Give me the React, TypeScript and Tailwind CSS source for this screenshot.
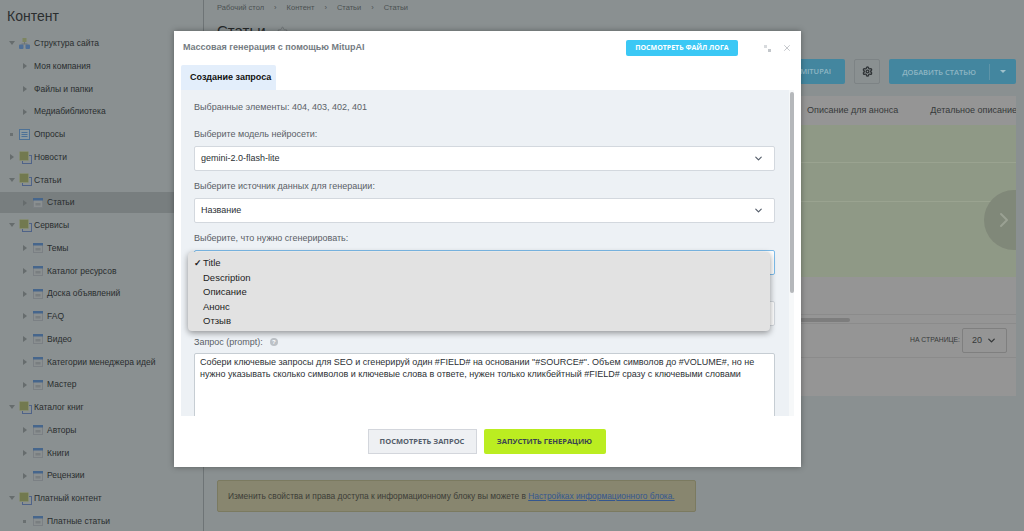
import { ChevronDown, ChevronRight, Settings, Star, X } from "lucide-react";

type Kind = "tree" | "poll" | "block" | "table";

const menu: { label: string; depth: number; arrow: "down" | "right" | "dot"; icon?: Kind; active?: boolean }[] = [
  { label: "Структура сайта", depth: 0, arrow: "down", icon: "tree" },
  { label: "Моя компания", depth: 1, arrow: "right" },
  { label: "Файлы и папки", depth: 1, arrow: "right" },
  { label: "Медиабиблиотека", depth: 1, arrow: "right" },
  { label: "Опросы", depth: 0, arrow: "dot", icon: "poll" },
  { label: "Новости", depth: 0, arrow: "right", icon: "block" },
  { label: "Статьи", depth: 0, arrow: "down", icon: "block" },
  { label: "Статьи", depth: 1, arrow: "right", icon: "table", active: true },
  { label: "Сервисы", depth: 0, arrow: "down", icon: "block" },
  { label: "Темы", depth: 1, arrow: "right", icon: "table" },
  { label: "Каталог ресурсов", depth: 1, arrow: "right", icon: "table" },
  { label: "Доска объявлений", depth: 1, arrow: "right", icon: "table" },
  { label: "FAQ", depth: 1, arrow: "right", icon: "table" },
  { label: "Видео", depth: 1, arrow: "right", icon: "table" },
  { label: "Категории менеджера идей", depth: 1, arrow: "right", icon: "table" },
  { label: "Мастер", depth: 1, arrow: "right", icon: "table" },
  { label: "Каталог книг", depth: 0, arrow: "down", icon: "block" },
  { label: "Авторы", depth: 1, arrow: "right", icon: "table" },
  { label: "Книги", depth: 1, arrow: "right", icon: "table" },
  { label: "Рецензии", depth: 1, arrow: "right", icon: "table" },
  { label: "Платный контент", depth: 0, arrow: "down", icon: "block" },
  { label: "Платные статьи", depth: 1, arrow: "dot", icon: "table" },
];

function MenuIcon({ kind }: { kind: Kind }) {
  if (kind === "tree") {
    return (
      <svg width="11" height="11" viewBox="0 0 11 11" className="shrink-0">
        <rect x="3.5" y="0" width="4" height="4" fill="#7d8560" />
        <path d="M5.5 4v2M2.5 6h6" stroke="#6c7477" fill="none" />
        <rect x="0" y="6.5" width="4.5" height="4.5" rx="1" fill="#4f6f96" />
        <rect x="6.5" y="6.5" width="4.5" height="4.5" rx="1" fill="#4f6f96" />
      </svg>
    );
  }
  if (kind === "poll") {
    return (
      <svg width="11" height="11" viewBox="0 0 11 11" className="shrink-0">
        <rect x="0.5" y="0.5" width="10" height="10" fill="#8d9aa0" stroke="#4d7196" />
        <path d="M2.5 3.5h6M2.5 5.5h6M2.5 7.5h6" stroke="#4d7196" />
      </svg>
    );
  }
  if (kind === "block") {
    return (
      <svg width="13" height="13" viewBox="0 0 13 13" className="shrink-0">
        <rect x="3.5" y="4.5" width="9" height="8" fill="none" stroke="#4f6388" />
        <rect x="0.5" y="0.5" width="9" height="9" rx="1" fill="#72794f" stroke="#858c72" />
      </svg>
    );
  }
  return (
    <svg width="10" height="10" viewBox="0 0 10 10" className="shrink-0">
      <rect x="0.5" y="0.5" width="9" height="9" fill="#8a8f90" stroke="#7b8084" />
      <rect x="0" y="0" width="10" height="2.5" fill="#46668c" />
      <rect x="2.5" y="5" width="5" height="2.5" fill="#797e80" />
    </svg>
  );
}

function Arrow({ type }: { type: "down" | "right" | "dot" }) {
  if (type === "dot") return <span className="block w-[3px] h-[3px] bg-[#6a7071] mx-[1px]" />;
  if (type === "down") {
    return <span className="block w-0 h-0 border-x-[3.5px] border-x-transparent border-t-[4px] border-t-[#666c6d]" />;
  }
  return <span className="block w-0 h-0 border-y-[3.5px] border-y-transparent border-l-[4px] border-l-[#666c6d] ml-[1px]" />;
}

function Sidebar() {
  return (
    <aside className="w-[204px] shrink-0 border-r border-[#6e7476] flex flex-col">
      <div className="h-[32px] shrink-0 pl-[7px] pt-[7px] text-[14px] leading-[18px] text-[#2a2e2f]">Контент</div>
      <ul className="flex flex-col">
        {menu.map((item, i) => (
          <li
            key={i}
            className={`flex items-center shrink-0 text-[8.5px] text-[#292d2e] ${
              item.active ? "h-[20.75px] my-[1px] bg-[#787e7f]" : "h-[22.75px]"
            } ${item.depth === 0 ? "pl-[9px]" : "pl-[22px]"}`}
          >
            <span className="w-[10px] flex justify-start shrink-0">
              <Arrow type={item.arrow} />
            </span>
            {item.icon && (
              <span className={`flex shrink-0 ${item.depth === 0 ? "w-[13px] mr-[2px]" : "ml-[1px] w-[10px] mr-[4px]"}`}>
                <MenuIcon kind={item.icon} />
              </span>
            )}
            {!item.icon && <span className="w-[0px] mr-[2px]" />}
            <span>{item.label}</span>
          </li>
        ))}
      </ul>
    </aside>
  );
}

function Background() {
  return (
    <main className="flex-1 min-w-0 pl-[13px] pr-[8px] flex flex-col">
      <div className="h-[16px] pt-[3px] flex gap-[10px] text-[7.5px] leading-[10px] text-[#4a5052]">
        <span>Рабочий стол</span>
        <span>›</span>
        <span>Контент</span>
        <span>›</span>
        <span>Статьи</span>
        <span>›</span>
        <span>Статьи</span>
      </div>
      <div className="h-[43px] pt-[3px] flex gap-[11px] text-[15px] leading-[24px] text-[#25292a]">
        Статьи
        <Star size={11} className="text-[#6e7476] mt-[7px]" />
      </div>
      <div className="h-[37px] flex items-start justify-end gap-[9px] font-['Open_Sans',sans-serif]">
        <div className="w-[60px] h-[25px] rounded-[2px] bg-[#43869f] flex items-center justify-end pr-[14px] text-[7.5px] font-semibold text-[#8fb6c4]">MITUPAI</div>
        <div className="w-[26px] h-[25px] rounded-[2px] border border-[#7d8385] flex items-center justify-center">
          <Settings size={11} strokeWidth={3} className="text-[#303437]" />
        </div>
        <div className="w-[127px] h-[25px] rounded-[2px] bg-[#43869f] flex items-center text-[7.5px] font-semibold text-[#8fb6c4]">
          <span className="w-[101px] text-center border-r border-[#5e94a8] leading-[16px]">ДОБАВИТЬ СТАТЬЮ</span>
          <span className="flex-1 flex justify-center">
            <span className="block w-0 h-0 border-x-[3px] border-x-transparent border-t-[3px] border-t-[#9fc1cc]" />
          </span>
        </div>
      </div>
      <div className="flex flex-col h-[300px] shrink-0 bg-[#959595] overflow-hidden">
        <div className="h-[29px] shrink-0 flex items-center justify-end gap-[32px] -mr-[1px] text-[9px] text-[#36393a] whitespace-nowrap">
          <span>Описание для анонса</span>
          <span>Детальное описание</span>
        </div>
        <div className="h-[152px] shrink-0 bg-[#8f9986] relative flex flex-col overflow-hidden">
          <div className="h-[38px] border-b border-[#9aa390]" />
          <div className="h-[39px] border-b border-[#9aa390]" />
          <span className="absolute right-[-28px] top-[65px] w-[60px] h-[60px] rounded-full bg-[#808879] flex items-center pl-[8px]">
            <ChevronRight size={24} className="text-[#9aa193]" />
          </span>
        </div>
        <div className="h-[38px] shrink-0 border-b border-[#8b8b8b]" />
        <div className="h-[9px] shrink-0 bg-[#959595] border-b border-[#8b8b8b] pt-[3px]">
          <span className="block h-[4px] w-[50px] ml-[583px] rounded-full bg-[#7d7d7d]" />
        </div>
        <div className="h-[34px] shrink-0 border-b border-[#8b8b8b] flex items-center justify-end pr-[9px] text-[6.8px] text-[#36393a]">
          <span className="mr-[2px]">НА СТРАНИЦЕ:</span>
          <span className="w-[45px] h-[25px] rounded-[2px] border border-[#7f7f7f] flex items-center justify-between px-[9px] text-[9px]">
            20
            <ChevronDown size={11} strokeWidth={3} />
          </span>
        </div>
      </div>
      <div className="mt-[84px] w-[479px] h-[32px] shrink-0 rounded-[2px] border border-[#7b7a60] bg-[#88866f] flex items-center pl-[10px] text-[8.4px] text-[#3c3d37] whitespace-nowrap">
        Изменить свойства и права доступа к информационному блоку вы можете в&nbsp;
        <span className="text-[#34578f] underline">Настройках информационного блока.</span>
      </div>
    </main>
  );
}

function Field({ label, value, first }: { label: string; value: string; first?: boolean }) {
  return (
    <>
      <div className={`h-[12px] leading-[12px] text-[#5a6066] ${first ? "mt-[15px]" : "mt-[9px]"}`}>{label}</div>
      <div className="mt-[6px] h-[25px] bg-white rounded-[2px] border border-[#d3d8de] flex items-center justify-between pl-[6px] pr-[10px] text-[#2c3034]">
        {value}
        <ChevronDown size={11} strokeWidth={2.5} className="text-[#535c69]" />
      </div>
    </>
  );
}

const options = ["Title", "Description", "Описание", "Анонс", "Отзыв"];

function Modal() {
  return (
    <div className="absolute left-[174px] top-[31px] w-[627px] h-[436px] bg-white shadow-[0_0_6px_rgba(0,0,0,0.35)] flex flex-col font-['Liberation_Sans',sans-serif]">
      <header className="h-[34px] shrink-0 flex items-center pl-[9px] pr-[9px]">
        <span className="text-[9px] font-bold text-[#747b82]">Массовая генерация с помощью MitupAI</span>
        <span className="ml-auto w-[112px] h-[16px] rounded-[2px] bg-[#3bc8f5] flex items-center justify-center font-['Open_Sans',sans-serif] text-[7px] font-bold text-white whitespace-nowrap">
          ПОСМОТРЕТЬ ФАЙЛ ЛОГА
        </span>
        <span className="ml-[26px] w-[7px] h-[7px] relative">
          <span className="absolute left-0 top-0 w-[3px] h-[3px] bg-[#d7dadd]" />
          <span className="absolute right-0 bottom-0 w-[3px] h-[3px] bg-[#c3c7cb]" />
        </span>
        <X size={10} strokeWidth={2} className="ml-[11px] text-[#b9bdc2]" />
      </header>
      <div className="pl-[7px]">
        <div className="w-[95px] h-[25px] rounded-t-[2px] bg-[#e3eefb] flex items-center pl-[9px] text-[9px] font-bold text-[#111]">
          Создание запроса
        </div>
      </div>
      <div className="mx-[7px] h-[326px] shrink-0 bg-[#edf1f5] relative overflow-hidden text-[9px]">
        <div className="pl-[13px] pr-[19px] pt-[5px]">
          <div className="h-[12px] leading-[12px] mt-[6px] text-[#5a6066]">Выбранные элементы: 404, 403, 402, 401</div>
          <Field first label="Выберите модель нейросети:" value="gemini-2.0-flash-lite" />
          <Field label="Выберите источник данных для генерации:" value="Название" />
          <div className="h-[12px] leading-[12px] mt-[9px] text-[#5a6066]">Выберите, что нужно сгенерировать:</div>
          <div className="relative mt-[6px] h-[25px] bg-white rounded-[2px] border border-[#7dbcea]">
            <ul className="absolute -left-[7px] top-[1px] w-[582px] h-[79px] z-10 rounded-[4px] bg-[#e2e2e2] shadow-[0_2px_6px_rgba(0,0,0,0.4)] text-[9.5px] text-[#1d1d1d] pt-[4px] font-medium">
              {options.map((o, i) => (
                <li key={o} className="h-[14.6px] leading-[14.6px] pl-[15px] relative">
                  {i === 0 && <span className="absolute left-[6px] text-[9px] font-bold">✓</span>}
                  {o}
                </li>
              ))}
            </ul>
          </div>
          <div className="mt-[26px] h-[25px] bg-white rounded-[2px] border border-[#d3d8de]" />
          <div className="h-[12px] leading-[12px] mt-[10px] text-[#5a6066] flex items-center">
            Запрос (prompt):
            <span className="ml-[7px] w-[8px] h-[8px] rounded-full bg-[#bcc1c6] text-white text-[6px] leading-[8px] text-center font-bold">?</span>
          </div>
          <div className="mt-[5px] h-[100px] bg-white rounded-[2px] border border-[#c6cdd3] px-[5px] pt-[3px] leading-[11.5px] text-[#2c3034]">
            Собери ключевые запросы для SEO и сгенерируй один #FIELD# на основании "#SOURCE#". Объем символов до #VOLUME#, но не нужно указывать сколько символов и ключевые слова в ответе, нужен только кликбейтный #FIELD# сразу с ключевыми словами
          </div>
        </div>
        <span className="absolute right-0 top-0 bottom-0 w-[5px] bg-[#f6f8f9]">
          <span className="block mt-[2px] w-[4px] h-[201px] ml-[1px] rounded-full bg-[#b5b8bb]" />
        </span>
      </div>
      <footer className="flex-1 flex items-start justify-center gap-[7px] pt-[13px] pr-[2px] font-['Open_Sans',sans-serif] text-[7.5px] font-bold">
        <span className="w-[109px] h-[25px] border border-[#d3d6dc] bg-[#eef0f3] flex items-center justify-center text-[#535c69]">
          ПОСМОТРЕТЬ ЗАПРОС
        </span>
        <span className="w-[122px] h-[25px] rounded-[2px] bg-[#bbed21] flex items-center justify-center text-[#3a4352]">
          ЗАПУСТИТЬ ГЕНЕРАЦИЮ
        </span>
      </footer>
    </div>
  );
}

export default function App() {
  return (
    <div className="relative w-[1024px] h-[531px] overflow-hidden flex bg-[#8a9091] font-['Liberation_Sans',sans-serif]">
      <Sidebar />
      <Background />
      <Modal />
    </div>
  );
}
